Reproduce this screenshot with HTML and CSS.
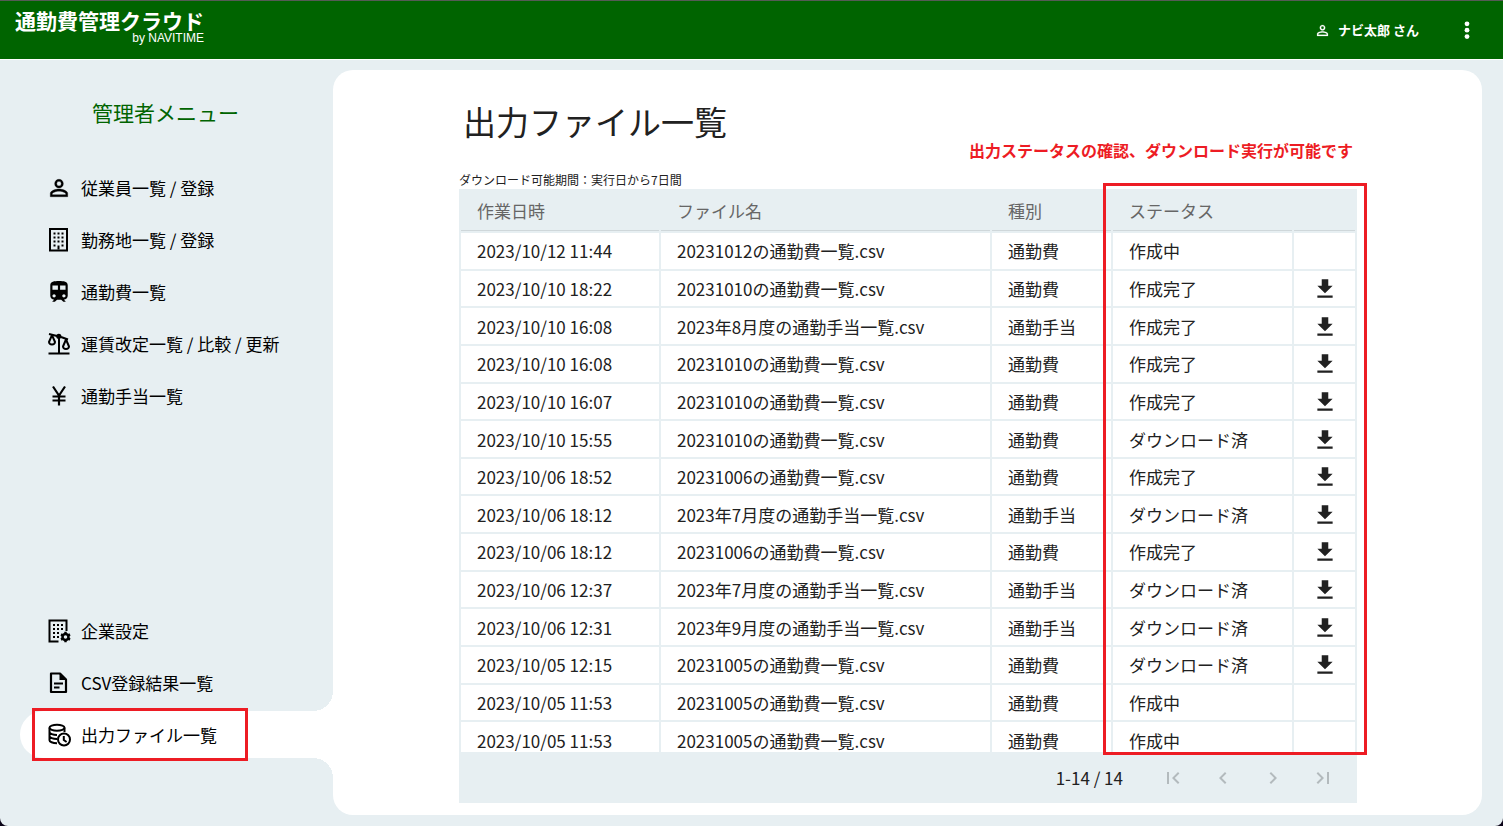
FILE: index.html
```html
<!DOCTYPE html>
<html lang="ja">
<head>
<meta charset="utf-8">
<title>出力ファイル一覧 - 通勤費管理クラウド</title>
<meta name="viewport" content="width=device-width, initial-scale=1">
<link rel="stylesheet" href="styles.css">
</head>
<body>
<svg class="sprite" aria-hidden="true">
  <symbol id="i-person" viewBox="1 1 22 22"><path fill="currentColor" stroke="currentColor" stroke-width=".3" d="M12 5.9a2.1 2.1 0 1 1 0 4.2 2.1 2.1 0 0 1 0-4.2m0 9c2.97 0 6.1 1.46 6.1 2.1v1.1H5.9V17c0-.64 3.13-2.1 6.1-2.1M12 4C9.79 4 8 5.79 8 8s1.79 4 4 4 4-1.79 4-4-1.79-4-4-4zm0 9c-2.67 0-8 1.34-8 4v3h16v-3c0-2.66-5.33-4-8-4z"/></symbol>
  <symbol id="i-building" viewBox="0 0 24 24"><path fill="none" stroke="currentColor" stroke-width="2" d="M3 1h17v21.500H3z"/><path stroke="currentColor" stroke-width="2" stroke-dasharray="2 2" d="M6.500 5.500h10M6.500 9.500h10M6.500 13.500h10M6.500 17.500h2M14.500 17.500h2"/><path fill="currentColor" d="M10.500 17.500h2v4h-2z"/></symbol>
  <symbol id="i-train" viewBox="1 1 22 22"><path fill="currentColor" d="M12 2c-4.42 0-8 .5-8 4v9.5C4 17.43 5.57 19 7.500 19L6 20.500v.5h2.230l2-2H14l2 2h2v-.5L16.500 19c1.930 0 3.500-1.570 3.500-3.500V6c0-3.500-3.580-4-8-4zM7.500 17c-.83 0-1.500-.67-1.500-1.500S6.670 14 7.500 14s1.500.67 1.500 1.500S8.330 17 7.500 17zm3.500-7H6V6h5v4zm2 0V6h5v4h-5zm3.500 7c-.83 0-1.500-.67-1.500-1.500s.67-1.500 1.500-1.500 1.500.67 1.500 1.500-.67 1.500-1.500 1.500z"/></symbol>
  <symbol id="i-scale" viewBox="0 0 24 24"><path fill="none" stroke="currentColor" stroke-width="2" d="M1.500 21.500h21M12 5v16.500M2 2l8 2M14 5l7 2.500"/><circle cx="11.800" cy="4.300" r="2.600" fill="currentColor"/><path fill="none" stroke="currentColor" stroke-width="2" stroke-linejoin="round" d="M5 3.200L2 10c.3 3.300 5.700 3.300 6 0zM19 7.500L16 14.500c.3 3.300 5.700 3.300 6 0z"/></symbol>
  <symbol id="i-yen" viewBox="0 0 24 24"><path fill="none" stroke="currentColor" stroke-width="2.200" d="M6 2.500l6 9 6-9M12 11v10.500M5.500 12.500h13M5.500 16.500h13"/></symbol>
  <symbol id="i-company" viewBox="0 0 24 24"><path fill="none" stroke="currentColor" stroke-width="2" d="M19.500 12V1.500h-17v21h9"/><path stroke="currentColor" stroke-width="2" stroke-dasharray="2 2" d="M6 6h10M6 10h10M6 14h6M6 18h6"/><circle cx="18.500" cy="18" r="3" fill="none" stroke="currentColor" stroke-width="2.500"/><path stroke="currentColor" stroke-width="2.400" d="M18.500 12.800v2M18.500 21.200v2M14 15.400l1.700 1M21.300 19.600l1.700 1M14 20.600l1.700-1M21.300 16.400l1.700-1"/></symbol>
  <symbol id="i-file" viewBox="0 0 24 24"><path fill="none" stroke="currentColor" stroke-width="2.200" stroke-linejoin="round" d="M4 2.500h9l6 6v12.500h-15z"/><path fill="currentColor" d="M12.500 2.500v6.500h6.500z"/><path stroke="currentColor" stroke-width="2" d="M7 12.500h9M7 16.500h5.500"/></symbol>
  <symbol id="i-history" viewBox="0 0 24 24"><g fill="none" stroke="currentColor" stroke-width="2"><ellipse cx="10" cy="4.800" rx="7.500" ry="3"/><path d="M2.500 4.800v12.400c0 1.500 3 3 7.500 3M17.500 4.800V9M2.500 9c0 1.700 3.500 3 7.500 3M2.500 13c0 1.700 3.500 3 7.500 3"/><circle cx="17" cy="16.500" r="6"/><path d="M16.800 13v4l2.800 2"/></g></symbol>
  <symbol id="i-download" viewBox="1 1 22 22"><path fill="currentColor" d="M19 9h-4V3H9v6H5l7 7 7-7zM5 18v2h14v-2H5z"/></symbol>
  <symbol id="i-first" viewBox="0 0 24 24"><path fill="currentColor" d="M18.410 16.590L13.820 12l4.590-4.590L17 6l-6 6 6 6zM6 6h2v12H6z"/></symbol>
  <symbol id="i-prev" viewBox="0 0 24 24"><path fill="currentColor" d="M15.410 7.410L14 6l-6 6 6 6 1.410-1.410L10.830 12z"/></symbol>
  <symbol id="i-next" viewBox="0 0 24 24"><path fill="currentColor" d="M10 6L8.590 7.410 13.170 12l-4.580 4.590L10 18l6-6z"/></symbol>
  <symbol id="i-last" viewBox="0 0 24 24"><path fill="currentColor" d="M5.590 7.410L10.180 12l-4.590 4.590L7 18l6-6-6-6zM16 6h2v12h-2z"/></symbol>
  <symbol id="i-more" viewBox="0 0 24 24"><g fill="currentColor"><circle cx="12" cy="5.800" r="2.400"/><circle cx="12" cy="12.200" r="2.400"/><circle cx="12" cy="18.600" r="2.400"/></g></symbol>
</svg>

<div class="app">
  <header class="header">
    <a class="logo" href="#"><span class="logo-name">通勤費管理クラウド</span><span class="logo-by">by NAVITIME</span></a>
    <div class="header-right">
      <button class="user" type="button"><svg><use href="#i-person"/></svg>ナビ太郎 さん</button>
      <button class="more" type="button" aria-label="メニュー"><svg><use href="#i-more"/></svg></button>
    </div>
  </header>

  <div class="body">
    <nav class="sidebar">
      <h2 class="menu-title">管理者メニュー</h2>
      <ul class="menu">
        <li><a class="item" href="#"><svg><use href="#i-person"/></svg>従業員一覧 / 登録</a></li>
        <li><a class="item" href="#"><svg><use href="#i-building"/></svg>勤務地一覧 / 登録</a></li>
        <li><a class="item" href="#"><svg><use href="#i-train"/></svg>通勤費一覧</a></li>
        <li><a class="item" href="#"><svg><use href="#i-scale"/></svg>運賃改定一覧 / 比較 / 更新</a></li>
        <li><a class="item" href="#"><svg><use href="#i-yen"/></svg>通勤手当一覧</a></li>
      </ul>
      <ul class="menu menu-bottom">
        <li><a class="item" href="#"><svg><use href="#i-company"/></svg>企業設定</a></li>
        <li><a class="item" href="#"><svg><use href="#i-file"/></svg>CSV登録結果一覧</a></li>
        <li class="active"><a class="item" href="#" aria-current="page"><svg><use href="#i-history"/></svg>出力ファイル一覧</a><span class="mark mark-menu"></span></li>
      </ul>
    </nav>

    <main class="main">
      <h1 class="title">出力ファイル一覧</h1>
      <p class="period">ダウンロード可能期間：実行日から7日間</p>
      <div class="list">
        <p class="callout">出力ステータスの確認、ダウンロード実行が可能です</p>
        <div class="scroll">
          <table class="files">
            <colgroup><col class="c-date"><col><col class="c-type"><col class="c-status"><col class="c-action"></colgroup>
            <thead><tr><th>作業日時</th><th>ファイル名</th><th>種別</th><th>ステータス</th><th></th></tr></thead>
            <tbody>
              <tr><td>2023/10/12 11:44</td><td>20231012の通勤費一覧.csv</td><td>通勤費</td><td>作成中</td><td></td></tr>
              <tr><td>2023/10/10 18:22</td><td>20231010の通勤費一覧.csv</td><td>通勤費</td><td>作成完了</td><td><button class="dl" type="button" aria-label="ダウンロード"><svg><use href="#i-download"/></svg></button></td></tr>
              <tr><td>2023/10/10 16:08</td><td>2023年8月度の通勤手当一覧.csv</td><td>通勤手当</td><td>作成完了</td><td><button class="dl" type="button" aria-label="ダウンロード"><svg><use href="#i-download"/></svg></button></td></tr>
              <tr><td>2023/10/10 16:08</td><td>20231010の通勤費一覧.csv</td><td>通勤費</td><td>作成完了</td><td><button class="dl" type="button" aria-label="ダウンロード"><svg><use href="#i-download"/></svg></button></td></tr>
              <tr><td>2023/10/10 16:07</td><td>20231010の通勤費一覧.csv</td><td>通勤費</td><td>作成完了</td><td><button class="dl" type="button" aria-label="ダウンロード"><svg><use href="#i-download"/></svg></button></td></tr>
              <tr><td>2023/10/10 15:55</td><td>20231010の通勤費一覧.csv</td><td>通勤費</td><td>ダウンロード済</td><td><button class="dl" type="button" aria-label="ダウンロード"><svg><use href="#i-download"/></svg></button></td></tr>
              <tr><td>2023/10/06 18:52</td><td>20231006の通勤費一覧.csv</td><td>通勤費</td><td>作成完了</td><td><button class="dl" type="button" aria-label="ダウンロード"><svg><use href="#i-download"/></svg></button></td></tr>
              <tr><td>2023/10/06 18:12</td><td>2023年7月度の通勤手当一覧.csv</td><td>通勤手当</td><td>ダウンロード済</td><td><button class="dl" type="button" aria-label="ダウンロード"><svg><use href="#i-download"/></svg></button></td></tr>
              <tr><td>2023/10/06 18:12</td><td>20231006の通勤費一覧.csv</td><td>通勤費</td><td>作成完了</td><td><button class="dl" type="button" aria-label="ダウンロード"><svg><use href="#i-download"/></svg></button></td></tr>
              <tr><td>2023/10/06 12:37</td><td>2023年7月度の通勤手当一覧.csv</td><td>通勤手当</td><td>ダウンロード済</td><td><button class="dl" type="button" aria-label="ダウンロード"><svg><use href="#i-download"/></svg></button></td></tr>
              <tr><td>2023/10/06 12:31</td><td>2023年9月度の通勤手当一覧.csv</td><td>通勤手当</td><td>ダウンロード済</td><td><button class="dl" type="button" aria-label="ダウンロード"><svg><use href="#i-download"/></svg></button></td></tr>
              <tr><td>2023/10/05 12:15</td><td>20231005の通勤費一覧.csv</td><td>通勤費</td><td>ダウンロード済</td><td><button class="dl" type="button" aria-label="ダウンロード"><svg><use href="#i-download"/></svg></button></td></tr>
              <tr><td>2023/10/05 11:53</td><td>20231005の通勤費一覧.csv</td><td>通勤費</td><td>作成中</td><td></td></tr>
              <tr><td>2023/10/05 11:53</td><td>20231005の通勤費一覧.csv</td><td>通勤費</td><td>作成中</td><td></td></tr>
            </tbody>
          </table>
        </div>
        <span class="mark mark-status"></span>
      </div>
      <div class="pager">
        <span class="range">1-14 / 14</span>
        <button type="button" disabled aria-label="最初のページ"><svg><use href="#i-first"/></svg></button>
        <button type="button" disabled aria-label="前のページ"><svg><use href="#i-prev"/></svg></button>
        <button type="button" disabled aria-label="次のページ"><svg><use href="#i-next"/></svg></button>
        <button type="button" disabled aria-label="最後のページ"><svg><use href="#i-last"/></svg></button>
      </div>
    </main>
  </div>
</div>
</body>
</html>
```
FILE: styles.css
```css
:root {
  --green: #006400;
  --panel: #e7eff2;
  --ink: #212121;
  --red: #ed1c24;
}

* { box-sizing: border-box; }

html { background: #0b0418; }

body {
  margin: 0;
  color: var(--ink);
  font: 17px/24px "Noto Sans CJK JP", "Noto Sans", sans-serif;
}

h1, h2, p, ul { margin: 0; padding: 0; font-weight: 400; }
ul { list-style: none; }
a { color: inherit; text-decoration: none; }
button { border: 0; padding: 0; background: none; color: inherit; font: inherit; }
svg { display: block; flex: none; width: 24px; height: 24px; }
.sprite { position: absolute; width: 0; height: 0; }

.app {
  display: flex;
  flex-direction: column;
  height: 100vh;
  background: var(--panel);
  border-radius: 0 0 8px 8px;
}

.header {
  display: flex;
  flex: none;
  justify-content: space-between;
  align-items: center;
  height: 60px;
  padding: 0 24px 0 15px;
  border-top: 1px solid #555b55;
  border-bottom: 1px solid #fff;
  background: var(--green);
  color: #fff;
}
.logo { display: flex; flex-direction: column; padding-bottom: 9px; }
.logo-name { font-size: 21px; line-height: 24px; font-weight: 700; }
.logo-by {
  font: 12px/12px "Liberation Sans", Arial, sans-serif;
  text-align: right;
}
.header-right { display: flex; align-items: center; gap: 36px; }
.user { display: flex; align-items: center; gap: 8px; font-size: 13px; font-weight: 700; }
.user svg { width: 15px; height: 15px; }

.body { display: flex; flex: 1; min-height: 0; }

.sidebar {
  display: flex;
  flex: none;
  flex-direction: column;
  width: 333px;
  padding: 36px 0 68px 20px;
}
.menu-title {
  margin-bottom: 36px;
  padding-right: 22px;
  color: var(--green);
  font-size: 21px;
  line-height: 32px;
  text-align: center;
}
.menu { display: flex; flex-direction: column; gap: 5px; color: #000; }
.menu-bottom { margin-top: auto; }
.item { display: flex; align-items: center; gap: 10px; height: 47px; padding-left: 27px; }
.active { position: relative; border-radius: 24px 0 0 24px; background: #fff; }
.active::before,
.active::after {
  content: "";
  position: absolute;
  right: 0;
  width: 20px;
  height: 20px;
}
.active::before { bottom: 100%; background: radial-gradient(circle at 0 0, transparent 20px, #fff 20px); }
.active::after { top: 100%; background: radial-gradient(circle at 0 100%, transparent 20px, #fff 20px); }

.main {
  display: flex;
  flex: 1;
  flex-direction: column;
  min-width: 0;
  margin: 10px 21px 11px 0;
  padding: 27px 125px 12px 126px;
  border-radius: 20px;
  background: #fff;
}
.title { padding-left: 4px; font-size: 33px; line-height: 48px; }
.period { margin-top: 26px; font-size: 12px; line-height: 18px; }

.list { position: relative; flex: 1; min-height: 0; }
.scroll { height: 100%; overflow-y: auto; scrollbar-width: none; background: var(--panel); }
.files {
  width: 100%;
  height: 571px;
  table-layout: fixed;
  border-spacing: 2px;
}
.c-date { width: 198px; }
.c-type { width: 119px; }
.c-status { width: 179px; }
.c-action { width: 61px; }
.files th, .files td { padding: 1px 16px 0; text-align: left; white-space: nowrap; }
.files th { height: 40px; border-bottom: 1px solid #cfd7da; color: #666; font-weight: 400; }
.files td { background: #fff; }
.dl { display: block; margin: 0 auto; }

.pager {
  display: flex;
  flex: none;
  align-items: center;
  justify-content: flex-end;
  height: 51px;
  padding-right: 9px;
  background: var(--panel);
}
.pager button { display: flex; justify-content: center; width: 50px; color: #b3babd; }
.range { margin-right: 25px; }

.callout {
  position: absolute;
  right: 4px;
  bottom: calc(100% + 27px);
  color: var(--red);
  font-size: 16px;
  font-weight: 700;
  white-space: nowrap;
}
.mark { position: absolute; border: 3px solid var(--red); pointer-events: none; }
.mark-menu { top: -3px; bottom: -3px; left: 12px; width: 216px; }
.mark-status { top: -6px; right: -10px; bottom: -3px; width: 264px; }
```
